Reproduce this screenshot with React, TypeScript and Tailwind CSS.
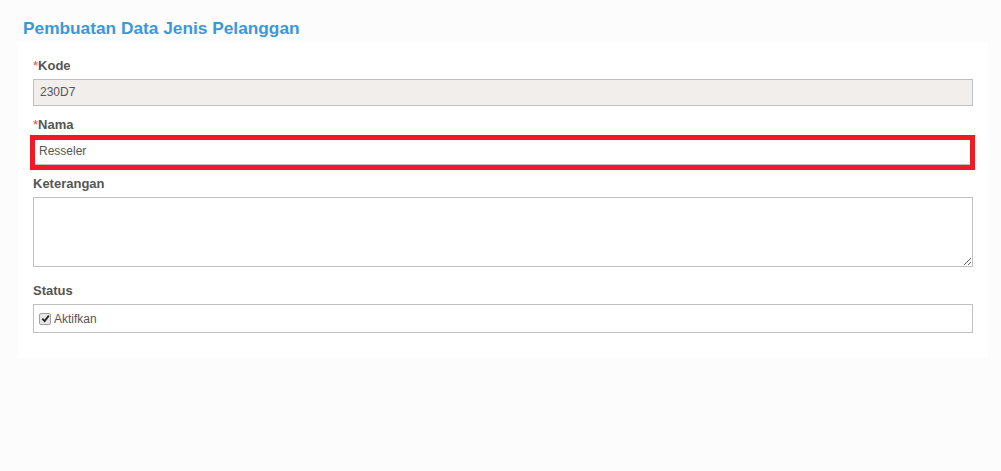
const Label = ({ text, required }: { text: string; required?: boolean }) => (
  <div className="h-[18px] leading-[20px] text-[13px] font-bold text-[#555]">
    {required && <span className="font-normal text-[#e8494a]">*</span>}
    {text}
  </div>
);

const App = () => {
  return (
    <div
      className="min-h-[471px] bg-[#fcfcfc] pt-[17px]"
      style={{ fontFamily: '"Liberation Sans", Arial, sans-serif' }}
    >
      <h1 className="ml-[23px] h-[22px] leading-[22px] text-[17.3px] font-bold text-[#3b98d8]">
        Pembuatan Data Jenis Pelanggan
      </h1>

      <div className="ml-[18px] mt-[3px] w-[970px] bg-white px-[15px] pt-[14px] pb-[25px]">
        <Label text="Kode" required />
        <div className="mt-[5px] h-[27px] border border-[#c0c0c0] bg-[#f2eeeb] px-[6px] text-[12px] leading-[25px] text-[#555]">
          230D7
        </div>

        <div className="mt-[9px]">
          <Label text="Nama" required />
        </div>
        <div className="mt-[2px] -ml-[3px] -mr-[2px] h-[35px] border-[5px] border-[#ed1c24] bg-white">
          <div className="h-[25px] border-b border-[#c0c0c0] pl-[4px] text-[12px] leading-[23px] text-[#555]">
            Resseler
          </div>
        </div>

        <div className="mt-[4px]">
          <Label text="Keterangan" />
        </div>
        <textarea className="mt-[5px] block h-[70px] w-full border border-[#c0c0c0] bg-white outline-none" />

        <div className="mt-[14px]">
          <Label text="Status" />
        </div>
        <div className="mt-[5px] flex h-[29px] items-center border border-[#c0c0c0] bg-white pl-[5px]">
          <span className="flex h-[12px] w-[12px] items-center justify-center rounded-[2px] border border-[#a0a0a0] bg-[#e6e6e6]">
            <svg width="9" height="9" viewBox="0 0 10 10">
              <path d="M1.5 5.2 L4 7.8 L8.7 1.8" fill="none" stroke="#222" strokeWidth="2" />
            </svg>
          </span>
          <span className="ml-[3px] text-[12px] text-[#555]">Aktifkan</span>
        </div>
      </div>
    </div>
  );
};

export default App;
